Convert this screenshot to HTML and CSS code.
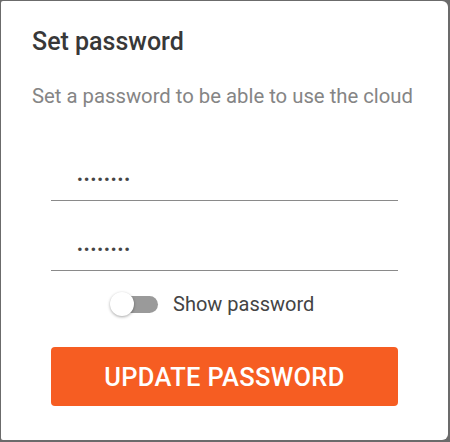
FILE: index.html
```html
<!DOCTYPE html>
<html>
<head>
<meta charset="utf-8">
<link rel="stylesheet" href="styles.css">
</head>
<body>
<div class="card">
  <h1 class="title">Set password</h1>
  <p class="subtitle">Set a password to be able to use the cloud</p>
  <div class="form">
    <div class="field"><input type="password" value="12345678" class="input"></div>
    <div class="field field-second"><input type="password" value="12345678" class="input"></div>
    <label class="toggle-row">
      <span class="switch"><span class="track"></span><span class="thumb"></span></span>
      <span class="toggle-label">Show password</span>
    </label>
    <button class="btn">UPDATE PASSWORD</button>
  </div>
</div>
</body>
</html>
```
FILE: styles.css
```css
html, body {
  margin: 0;
  padding: 0;
}
body {
  background: #6b6b6b;
  width: 450px;
  height: 442px;
  padding: 1px 2px 2px 1px;
  box-sizing: border-box;
  font-family: Roboto, "Noto Sans", sans-serif;
}
.card {
  background: #fff;
  height: 100%;
  border-radius: 2px 6px 6px 2px;
  box-sizing: border-box;
  padding: 26px 31px 0 31px;
}
.title {
  margin: 0;
  font-size: 25px;
  font-weight: 500;
  color: #383838;
  line-height: 30px;
}
.subtitle {
  margin: 27px 0 0 0;
  font-size: 20.3px;
  color: #858585;
  line-height: 24px;
  white-space: nowrap;
}
.form {
  padding: 0 19px;
  display: flex;
  flex-direction: column;
}
.field {
  margin-top: 50px;
  border-bottom: 1px solid #8a8a8a;
}
.field-second {
  margin-top: 27px;
}
.input {
  display: block;
  border: none;
  outline: none;
  width: 100%;
  box-sizing: border-box;
  padding: 0 0 0 26px;
  height: 42px;
  font-family: Roboto, sans-serif;
  font-size: 17px;
  color: #444;
  letter-spacing: 1px;
  background: transparent;
}
.toggle-row {
  display: flex;
  align-items: center;
  gap: 15px;
  margin-top: 21px;
  padding-left: 59px;
}
.switch {
  position: relative;
  width: 48px;
  height: 24px;
  display: block;
}
.track {
  position: absolute;
  left: 10px;
  top: 4px;
  width: 38px;
  height: 17px;
  border-radius: 9px;
  background: #9a9a9a;
}
.thumb {
  position: absolute;
  left: 0;
  top: 0;
  width: 24px;
  height: 24px;
  border-radius: 50%;
  background: #fff;
  box-shadow: 0 1px 3px rgba(0,0,0,0.35);
}
.toggle-label {
  font-size: 20px;
  color: #444;
}
.btn {
  margin-top: 31px;
  height: 59px;
  border: none;
  border-radius: 4px;
  background: #f65d22;
  color: #fff;
  font-family: Roboto, sans-serif;
  font-size: 25.5px;
  font-weight: 500;
  letter-spacing: 0.3px;
}
```
